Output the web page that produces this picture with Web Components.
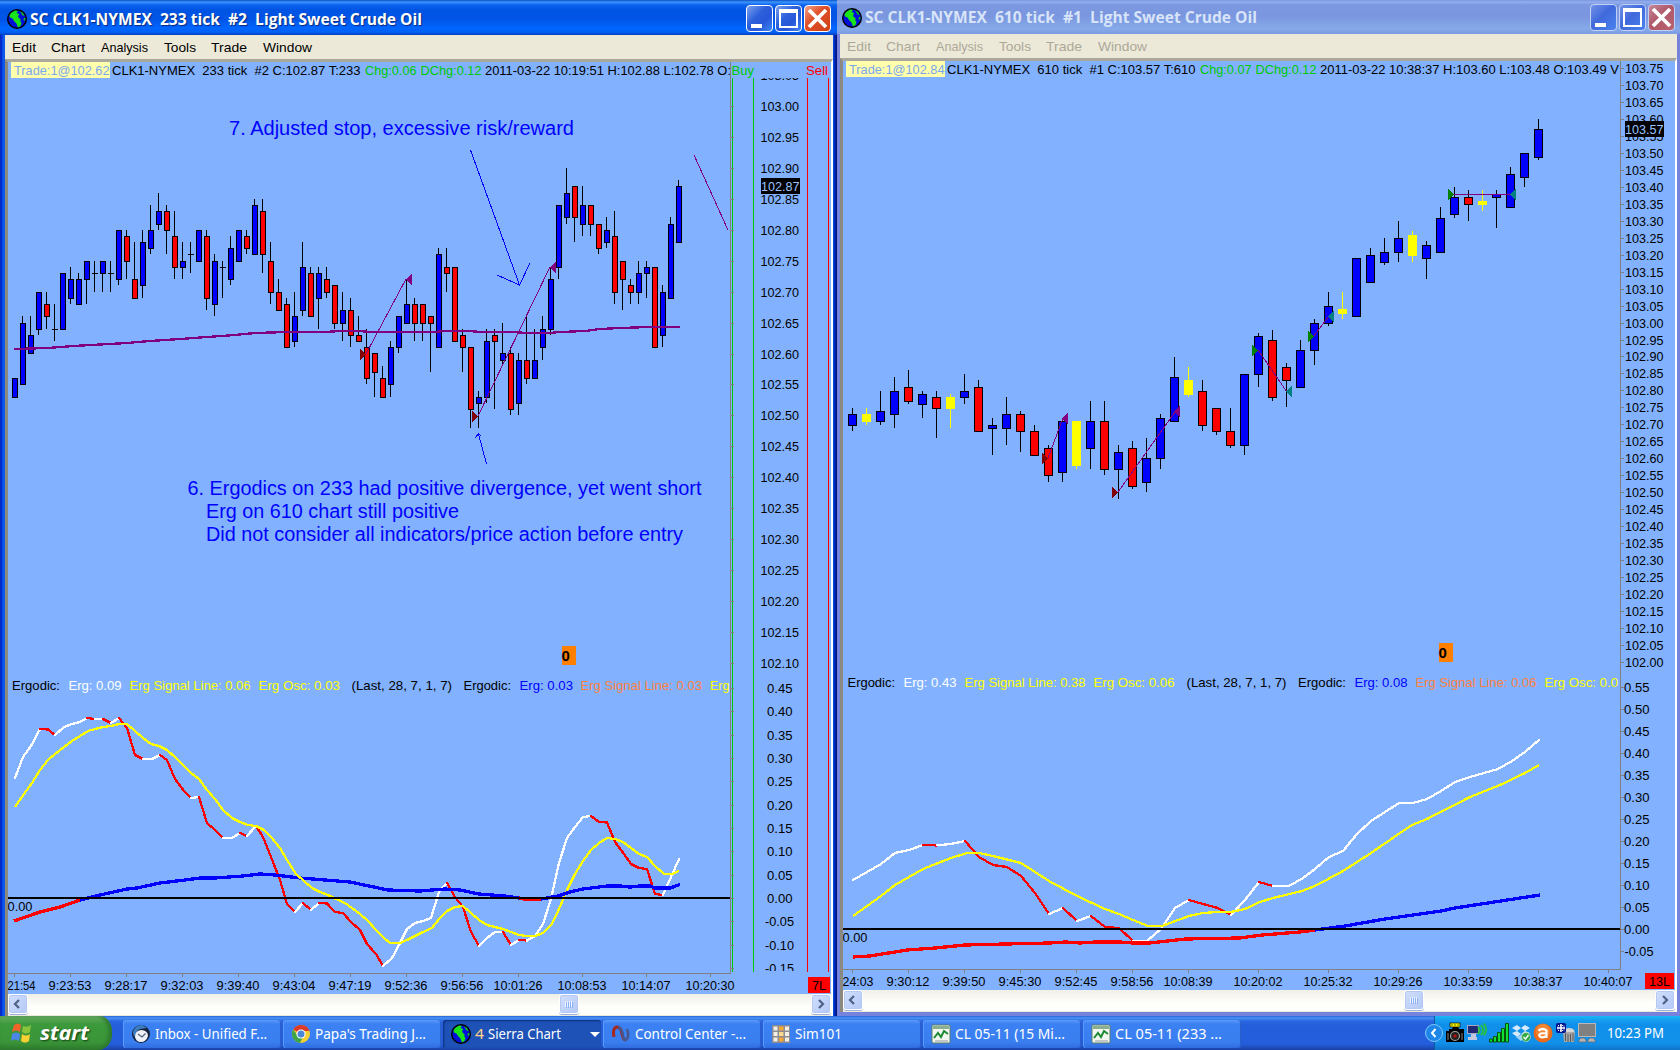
<!DOCTYPE html>
<html lang="en">
<head>
<meta charset="utf-8">
<title>Sierra Chart</title>
<style>
  html, body {
    margin: 0;
    height: 100%;
  }

  body {
    display: flex;
    flex-direction: column;
    width: 1680px;
    height: 1050px;
    overflow: hidden;
    background: #004e98;
    font-family: "Liberation Sans", Arial, sans-serif;
  }

  main {
    display: flex;
    height: 1016px;
  }
</style>
</head>
<body>
<main>
  <chart-window caption="SC CLK1-NYMEX  233 tick  #2  Light Sweet Crude Oil" thumb="531">
    <price-chart name="tick233"></price-chart>
  </chart-window>
  <chart-window inactive caption="SC CLK1-NYMEX  610 tick  #1  Light Sweet Crude Oil" thumb="541">
    <price-chart name="tick610"></price-chart>
  </chart-window>
</main>
<task-bar>
  <task-button icon="mail" label="Inbox - Unified F..." w="112"></task-button>
  <task-button icon="chrome" label="Papa's Trading J..." w="111"></task-button>
  <task-button icon="globe" label="Sierra Chart" count="4" w="73" active></task-button>
  <task-button icon="control" label="Control Center -..." w="111"></task-button>
  <task-button icon="grid" label="Sim101" w="47"></task-button>
  <task-button icon="chart" label="CL 05-11 (15 Mi..." w="110"></task-button>
  <task-button icon="chart" label="CL 05-11 (233 ..." w="107"></task-button>
</task-bar>

<script>
const BLACK = "#000";
const WHITE = "#fff";
const YELLOW = "#ff0";
const ORANGE = "#ff8040";
const BLUE = "#00f";
const RED = "#f00";
const GREEN = "#00c800";
const GRAY = "#808080";
const PURPLE = "#800080";
const MAROON = "#800000";
const BACK = "#82b2ff";

const ICONS = {
  globe: `
    <circle cx="10" cy="10" r="9.3" fill="#0010d8" stroke="#000" stroke-width="1.4"/>
    <path d="M4 4 L8 1.500 L11 2 L9.500 4 L12 5 L11 8 L12 9 L14 11 L13 12 L14.500 14 L13.500 17 L11 18.500 L9.500 14.500 L7 12 L5.500 9.500 L3 8.500 L2.500 6.500 Z" fill="#18e418"/>
    <path d="M13 2 L16 4 L17.500 7 L15.500 6.500 L14.500 4.500 Z M17 9 L18.500 9 L18 12 L16.500 11 Z" fill="#10c818"/>`,
  mail: `
    <circle cx="10" cy="10" r="9" fill="#16223c"/>
    <path d="M2 8 Q4 1 11 1 L16 4 L9 5 Q4 7 5 14 Q2 12 2 8Z" fill="#3e7cc0"/>
    <path d="M4 13 Q4 6.500 10 6 Q17 6.500 17 12 Q15 18 10 18 Q5 18 4 13Z" fill="#eef2f8"/>
    <path d="M7 10 L11 13 L14.500 9.500" fill="none" stroke="#55617c" stroke-width="1.300"/>`,
  chrome: `
    <circle cx="10" cy="10" r="9" fill="#f6cf35"/>
    <path d="M10 10 L2.200 5.500 A9 9 0 0 1 18.500 7 L10 7Z" fill="#dc3a2b"/>
    <path d="M2.200 5.500 A9 9 0 0 0 9 19 L12 13 L7 12Z" fill="#3fa648"/>
    <circle cx="10" cy="10" r="4.600" fill="#fff"/>
    <circle cx="10" cy="10" r="3.500" fill="#4a86d8"/>`,
  control: `
    <path d="M3 13 Q1 4 6 3 Q10 3 11 10 Q12 15 14 16" fill="none" stroke="#a8281e" stroke-width="3"/>
    <path d="M7 3 Q11 4 12 12 Q13 17 15 16 Q19 13 16 5" fill="none" stroke="#47568c" stroke-width="2.600"/>`,
  grid: `
    <rect x="1" y="1" width="18" height="18" fill="#8c8c94"/>
    <g fill="#f4f0e4"><rect x="2.500" y="2.500" width="4" height="4"/><rect x="14" y="2.500" width="4" height="4"/><rect x="2.500" y="8" width="4" height="4"/><rect x="14" y="8" width="4" height="4"/><rect x="2.500" y="13.500" width="4" height="4"/><rect x="14" y="13.500" width="4" height="4"/></g>
    <g fill="#f6a833"><rect x="8" y="2.500" width="4.500" height="4"/><rect x="8" y="13.500" width="4.500" height="4"/></g><rect x="8" y="8" width="4.500" height="4" fill="#ffd98c"/>`,
  chart: `
    <rect x="1" y="1" width="18" height="18" rx="1" fill="#f2f6ee" stroke="#5d7c62"/>
    <rect x="2" y="2" width="16" height="3" fill="#8bb091"/>
    <path d="M3 14 L7 9 L10 13 L13 7 L17 10" fill="none" stroke="#1e8a34" stroke-width="2"/>
    <path d="M4 17 H17" stroke="#8b98a0"/>`,
};

// Captions are stretched to a fixed width so the columns never drift with the installed font.
class FitText extends HTMLElement {
  connectedCallback() {
    const w = Number(this.getAttribute("w"));
    const h = Number(this.getAttribute("h") || 20);
    const size = this.getAttribute("size") || 13;
    this.attachShadow({ mode: "open" });
    this.shadowRoot.innerHTML = `
      <style>
        :host { display: block; flex: none; width: ${w}px; height: ${h}px; }
        svg { display: block; overflow: visible; }
        text { white-space: pre; fill: currentColor; font-size: ${size}px; }
      </style>
      <svg width="${w}" height="${h}"><text x="0" y="${h * 0.75}" textLength="${w}" lengthAdjust="spacingAndGlyphs"></text></svg>
    `;
    this.shadowRoot.querySelector("text").textContent = this.textContent;
  }
}

class ChartWindow extends HTMLElement {
  connectedCallback() {
    const inactive = this.hasAttribute("inactive");
    const thumb = this.getAttribute("thumb");
    this.attachShadow({ mode: "open" });
    this.shadowRoot.innerHTML = `
      <style>
        :host {
          display: flex;
          flex-direction: column;
          box-sizing: border-box;
          width: 837px;
          height: 1016px;
          padding: 0 4px 0 5px;
          background: linear-gradient(90deg, #0a3fb4 0, #0019cf 1px, #0c58ea 3px, #0f5ce8 5px, #0f5ce8 833px, #0030d0 834px, #001070 837px);
          --title: linear-gradient(#0b4fc4 0, #3d96ff 2px, #0b62ee 5px, #0054e3 10px, #0055e8 20px, #0066ff 28px, #0062f6 32px, #0040c0 35px);
          --menu: #000;
          --button: linear-gradient(135deg, #7ba2ee, #2d61dc 40%, #2757d8 65%, #3f86f2);
          --close: linear-gradient(135deg, #f0a389, #e0512b 40%, #cf3f16);
          --edge: #fff;
        }
        :host([inactive]) {
          width: 843px;
          padding: 0 3px 4px;
          background: #7683dc;
          --title: linear-gradient(#7c96e0 0, #92aeee 2px, #7b98e0 5px, #7a96df 16px, #86aae9 29px, #7e9be2 34px);
          --menu: #aca899;
          --button: linear-gradient(135deg, #7292e8, #4069dc 45%, #4a82ee);
          --close: linear-gradient(135deg, #c48a9c, #b0586a 45%, #b86370);
          --edge: #c2d0f4;
        }
        header {
          display: flex;
          align-items: center;
          box-sizing: border-box;
          height: 35px;
          margin: 0 -4px 0 -5px;
          padding: 2px 6px 0 7px;
          background: var(--title);
          color: #fff;
          font-family: "Open Sans", sans-serif;
          font-weight: 700;
        }
        :host([inactive]) header {
          height: 34px;
          margin: 0 -3px;
          padding: 1px 5px 0;
          color: #d8e4f8;
        }
        header fit-text { margin-left: 3px; text-shadow: 1px 1px 1px #0a2a80; }
        :host([inactive]) header fit-text { text-shadow: none; }
        .buttons { display: flex; gap: 2px; margin-left: auto; }
        .buttons svg {
          box-sizing: border-box;
          width: 27px;
          height: 27px;
          border: 1px solid var(--edge);
          border-radius: 4px;
          background: var(--button);
        }
        .buttons svg:last-child { background: var(--close); }
        nav {
          display: flex;
          gap: 15.7px;
          align-items: center;
          height: 24px;
          padding-left: 6.5px;
          background: #ece9d8;
          color: var(--menu);
        }
        .client {
          display: flex;
          flex-direction: column;
          flex: 1;
          box-sizing: border-box;
          border: solid;
          border-width: 3px 2px 0 3px;
          border-color: #aaa79c #fff #808080 #8c8a80;
          background: #ece9d8;
        }
        footer {
          display: flex;
          align-items: flex-start;
          height: 21px;
          flex: none;
          background: linear-gradient(#f0efe8, #fefefb 60%, #fefefb);
          border-bottom: 1px solid #ece9d8;
        }
        footer svg {
          box-sizing: border-box;
          width: 20px;
          height: 20px;
          border: 1px solid #fff;
          border-radius: 3px;
          background: linear-gradient(135deg, #d0dffd, #b4c8f6);
          box-shadow: inset 0 0 0 1px #b4c8f2, 0 1px #9db3de;
        }
        footer svg:nth-child(2) { margin-left: ${thumb}px; }
        footer svg:last-child { margin-left: auto; }
      </style>
      <header>
        <svg width="20" height="20" viewBox="0 0 20 20">${ICONS.globe}</svg>
        <fit-text w="392" h="${inactive ? 21 : 22}" size="15.5">${this.getAttribute("caption")}</fit-text>
        <div class="buttons">
          <svg viewBox="0 0 25 25"><path d="M4 18h11v4H4z" fill="#fff"/></svg>
          <svg viewBox="0 0 25 25"><path d="M3 3h19v19H3zM5 7v13h15V7z" fill="#fff" fill-rule="evenodd"/></svg>
          <svg viewBox="0 0 25 25"><path d="M4 4L21 21M21 4L4 21" stroke="#fff" stroke-width="3.8"/></svg>
        </div>
      </header>
      <nav>
        <fit-text w="24">Edit</fit-text>
        <fit-text w="34">Chart</fit-text>
        <fit-text w="47">Analysis</fit-text>
        <fit-text w="32">Tools</fit-text>
        <fit-text w="36">Trade</fit-text>
        <fit-text w="49">Window</fit-text>
      </nav>
      <div class="client">
        <slot></slot>
        <footer>
          <svg viewBox="0 0 18 18"><path d="M10 5L6 9L10 13" fill="none" stroke="#4d6185" stroke-width="2.2"/></svg>
          <svg viewBox="0 0 18 18"><path d="M5.500 6v6M7.500 6v6M9.500 6v6M11.500 6v6" stroke="#eef4fe"/><path d="M6.500 7v6M8.500 7v6M10.500 7v6M12.500 7v6" stroke="#8cb0f8"/></svg>
          <svg viewBox="0 0 18 18"><path d="M7 5L11 9L7 13" fill="none" stroke="#4d6185" stroke-width="2.2"/></svg>
        </footer>
      </div>
    `;
  }
}

// Candles: colour, high, open/close top, open/close bottom, low.
// y = base + value * tick, so the 233 chart is written in ticks below 103.00.
const CHARTS = {
  tick233: {
    box: [8, 62, 823, 932],
    clipRight: 730,
    axisBottom: 973,
    candle: { x: 12, step: 8, width: 6, wick: 2, base: 106, tick: 6.187 },
    candles: `B44,44,47,47 B34,35,45,45 B34,37,40,40 B30,30,36,37 R30,32,34,36 D32,36,36,38 B27,27,36,36
      B26,28,31,32 B27,28,32,32 B25,25,28,32 D25,27,27,30 B25,25,27,30 D25,27,27,30 B20,20,28,29
      R20,21,25,28 R22,28,31,31 B20,22,29,31 B16,20,23,24 B14,17,19,20 R16,17,20,24 R17,21,26,28
      B22,25,26,28 D22,24,24,27 B20,20,25,25 R20,21,31,33 B24,25,32,34 D25,26,26,31 B21,23,28,29
      B20,20,25,25 R20,21,23,24 B15,16,24,24 R15,17,24,27 R22,25,30,32 R28,30,33,33 R31,32,39,39
      B30,34,38,39 B22,26,33,34 R26,27,34,34 B26,27,31,36 R26,28,30,31 R29,29,35,36 B30,33,35,38
      R31,33,37,39 R34,37,38,38 R36,39,44,45 R40,40,43,47 R42,44,47,47 B38,39,45,47 B34,34,39,40
      B28,32,35,35 R31,32,35,38 R32,32,35,38 R34,34,35,43 B23,24,39,39 R23,26,27,30 R26,26,38,38
      R36,37,39,43 R39,39,49,52 B46,47,48,52 B36,38,47,48 R36,37,38,49 B35,40,41,42 R39,40,49,50
      B40,41,48,50 R34,41,44,45 B36,41,44,44 B34,36,39,41 B26,28,36,37 B16,16,26,28 B10,14,18,19
      R13,13,18,22 B13,16,19,21 R16,16,19,21 R19,19,23,24 B18,20,22,23 R17,21,30,32 R25,25,28,33
      R28,29,30,32 B25,27,30,32 B25,26,27,31 R26,26,39,39 B29,30,37,39 B18,19,31,31 B12,13,22,22`,
    lines: [
      [PURPLE, 2.3, "14,349 48,348 73,346 100,344.500 127,343 150,341 180,339 207,337 235,335 255,333 287,332 325,332 340,331 360,331 370,332 435,332 445,331 470,331 480,332 515,332 525,333 550,333 560,332 585,331 600,329 620,328 650,327 680,327"],
      [RED, 3.3, "14,921 40,912 60,907 80,900"],
      [BLUE, 3.3, "80,900 100,895 127,889 137,888 160,883 185,880 200,878 215,878 243,876 260,874 275,875 300,878 350,882 388,890 420,891 432,890 445,889 460,890 479,894 505,896 519,898"],
      [YELLOW, 2.3, "15,807 24,794 32,783 40,770 48,760 55,754 64,747 72,741 80,736 88,731 95,729 103,727 111,726 119,724 127,724 135,731 143,738 151,744 159,746 167,750 176,758 184,766 191,773 199,779 207,790 215,799 223,810 232,818 240,822 248,825 256,826 264,830 271,837 280,848 287,860 296,874 304,881 312,888 320,892 328,895 336,899 345,903 352,908 360,914 368,921 376,930 384,938 390,943 400,943 407,940 415,936 423,932 432,928 439,919 447,911 455,907 463,906 471,913 479,920 487,925 495,927 503,929 511,932 519,935 527,936 535,936 543,933 552,924 559,909 567,890 575,874 583,861 591,850 599,843 607,838 615,839 623,842 631,848 639,854 647,857 655,866 664,874 672,874 679,871"],
      [RED, 3.3, "519,898 527,899.500 541,899.500"],
      [BLUE, 3.3, "541,899 558,896 570,892 583,889 607,886 620,886 630,887 640,886 650,886 655,888 670,888 680,884.500"],
    ],
    erg: "15,778 23,757 31,746 40,729 48,729.500 55,735 64,727 72,724 80,722 87,718 95,719 103,719 111,723 119,718 127,728 135,755 143,759 152,759 160,755 167,760 175,779 184,791 191,798 199,797 207,823 215,830 223,838 232,838 240,833 247,836 256,826 263,837 271,857 280,880 287,904 295,912 303,903 311,910 319,903 327,903.500 335,912 343,913 351,922 360,930 367,944 376,954 383,966 392,958 399,945 407,929 415,923 423,921 431,918 439,892 447,883 455,897 463,907 471,932 479,946 487,938 495,932 503,932 511,945 519,940 527,940.500 535,936 543,924 551,899 559,863 567,838 575,827 583,817 591,816 599,822 607,822.500 615,842 624,854 631,864 639,868 647,869 655,894 663,895 671,877 679,859",
    zero: 897,
    thin: [
      [PURPLE, "366,354 406,279"],
      [PURPLE, "478,416 550,267"],
      [PURPLE, "694,155 728,230"],
      [BLUE, "470.500,150 519.500,285"],
      [BLUE, "497,275 519.500,285 530,263"],
      [BLUE, "486.500,464 478.500,434"],
      [BLUE, "475,438 478.500,434 481,436"],
    ],
    markers: [[MAROON, 360, 349, 1], [PURPLE, 412, 274, -1], [MAROON, 472, 411, 1], [PURPLE, 556, 262, -1]],
    prices: { first: 103.05, count: 20, y: 75.100, step: 30.935, x: 760.500 },
    levels: { first: 0.45, count: 13, y: 688, step: 23.330, x: 767 },
    last: ["102.87", 761, 178],
    header: [
      [14, 109.500, "Trade:1@102.62", "#7ba8ec"],
      [112, 360.500, "CLK1-NYMEX  233 tick  #2 C:102.87 T:233", BLACK],
      [365, 416.500, "Chg:0.06", GREEN],
      [420.500, 481.500, "DChg:0.12", GREEN],
      [485, 731, "2011-03-22 10:19:51 H:102.88 L:102.78 O:", BLACK],
    ],
    tag: 11,
    headerY: 75,
    legend: [
      [12, 60, "Ergodic:", BLACK],
      [68.500, 121.500, "Erg: 0.09", WHITE],
      [129.500, 250.500, "Erg Signal Line: 0.06", YELLOW],
      [258.500, 340, "Erg Osc: 0.03", YELLOW],
      [351.500, 452, "(Last, 28, 7, 1, 7)", BLACK],
      [463.500, 511, "Ergodic:", BLACK],
      [519.500, 573, "Erg: 0.03", BLUE],
      [580.500, 702, "Erg Signal Line: 0.03", ORANGE],
      [710, 729.500, "Erg", YELLOW],
    ],
    legendY: 690,
    times: ["21:54", "9:23:53", "9:28:17", "9:32:03", "9:39:40", "9:43:04", "9:47:19", "9:52:36", "9:56:56", "10:01:26", "10:08:53", "10:14:07", "10:20:30"],
    timeX: [14, 70, 126, 182, 238, 294, 350, 406, 462, 518, 582, 646, 710],
    zeroBox: [562, 646],
    lots: ["7L", 808, 977, 22],
    notes: [
      [229, 574, 135, "7. Adjusted stop, excessive risk/reward"],
      [187.500, 701.500, 495, "6. Ergodics on 233 had positive divergence, yet went short"],
      [206, 459, 518, "Erg on 610 chart still positive"],
      [206, 683, 541, "Did not consider all indicators/price action before entry"],
    ],
    dom: true,
  },
  tick610: {
    box: [843, 61, 832, 929],
    clipRight: 1620,
    axisBottom: 969,
    candle: { x: 848, step: 14, width: 9, wick: 4, base: 0, tick: 1 },
    candles: `B408,414,425,431 Y408,414,421,425 B391,411,421,425 B377,391,414,428 R370,387,401,404
      B391,394,404,418 R391,397,408,438 Y394,397,408,428 B374,391,397,404 R380,387,431,432
      B418,425,428,455 B397,414,428,445 R411,414,431,452 R425,431,455,456 R445,448,475,482
      B421,421,472,482 Y421,421,465,469 B401,421,448,469 R401,421,469,475 B445,452,469,499
      R441,448,486,489 B438,458,482,492 B414,418,458,469 B357,377,421,421 Y367,380,394,397
      R380,391,425,431 R408,408,431,435 R408,431,445,448 B374,374,445,455 B333,336,374,387
      R330,340,397,401 R363,367,380,407 B340,350,387,388 B319,323,350,365 B292,306,323,326
      Y292,309,313,319 B258,258,316,317 B248,255,282,283 B238,252,262,265 B221,238,252,262
      Y231,235,255,262 B241,245,258,279 B207,218,252,253 B187,197,214,218 R190,197,204,221
      Y190,201,204,211 B190,194,197,228 B167,174,207,208 B153,153,177,187 B119,129,157,160`,
    lines: [
      [RED, 3.3, "853,957 870,956 907,950 935,948 965,945 1005,944 1050,943 1066,942 1080,943 1095,942 1120,942 1133,943 1150,943 1185,939 1240,938 1262,935 1300,932 1315,930"],
      [BLUE, 3.3, "1315,930 1345,926 1385,919 1441,911 1455,908 1540,895"],
      [YELLOW, 2.3, "853,916 867,906 881,896 895,885 923,869 951,858 967,853 979,853 993,856 1021,863 1035,872 1049,881 1077,896 1105,909 1119,914 1133,920 1148,926 1162,926 1189,916 1203,913 1217,912 1231,912 1245,909 1260,902 1273,898 1302,891 1315,886 1343,871 1371,853 1400,833 1412,825 1427,819 1470,797 1500,785 1525,773 1539,765"],
    ],
    erg: "853,880 867,872 881,864 895,853 909,850 923,845 937,845.400 951,844 965,841 979,857 993,865 1007,867 1021,876 1035,893 1049,914 1063,908 1077,921 1091,916 1105,927 1119,928 1133,941 1147,941 1161,929 1175,908 1189,900 1203,904 1218,908 1231,915 1245,900 1259,882 1273,886 1289,886 1303,878 1315,869 1329,857 1343,851 1357,834 1371,821 1385,812 1399,803 1413,803 1427,799 1441,791 1455,782 1470,777 1484,773 1498,769 1512,761 1525,752 1539,740",
    zero: 928,
    thin: [
      [PURPLE, "1048,458 1063,418"],
      [PURPLE, "1118,492 1175,412"],
      [PURPLE, "1258,350 1287,392"],
      [PURPLE, "1314,336 1329,316"],
      [PURPLE, "1454,194.500 1510,194.500"],
    ],
    markers: [
      [MAROON, 1042, 453, 1], [PURPLE, 1068, 413, -1], [MAROON, 1112, 487, 1], [PURPLE, 1180, 406, -1],
      ["#008000", 1252, 345, 1], ["#008080", 1292, 386, -1], ["#008000", 1308, 331, 1], ["#008080", 1334, 311, -1],
      ["#008000", 1448, 189, 1], ["#008080", 1516, 189, -1],
    ],
    prices: { first: 103.75, count: 36, y: 68, step: 16.970, x: 1625 },
    levels: { first: 0.55, count: 13, y: 687, step: 22, x: 1624 },
    last: ["103.57", 1625, 121],
    header: [
      [849, 944.500, "Trade:1@102.84", "#7ba8ec"],
      [947, 1195.500, "CLK1-NYMEX  610 tick  #1 C:103.57 T:610", BLACK],
      [1200, 1251.500, "Chg:0.07", GREEN],
      [1255.500, 1316.500, "DChg:0.12", GREEN],
      [1320, 1619, "2011-03-22 10:38:37 H:103.60 L:103.48 O:103.49 V", BLACK],
    ],
    tag: 846,
    headerY: 74,
    legend: [
      [847.500, 895, "Ergodic:", BLACK],
      [903.500, 956.500, "Erg: 0.43", WHITE],
      [964.500, 1085.500, "Erg Signal Line: 0.38", YELLOW],
      [1093.500, 1174.500, "Erg Osc: 0.06", YELLOW],
      [1186.500, 1286.500, "(Last, 28, 7, 1, 7)", BLACK],
      [1298, 1346, "Ergodic:", BLACK],
      [1354.500, 1407.500, "Erg: 0.08", BLUE],
      [1415.500, 1536.500, "Erg Signal Line: 0.06", ORANGE],
      [1544.500, 1618, "Erg Osc: 0.0", YELLOW],
    ],
    legendY: 687,
    times: ["24:03", "9:30:12", "9:39:50", "9:45:30", "9:52:45", "9:58:56", "10:08:39", "10:20:02", "10:25:32", "10:29:26", "10:33:59", "10:38:37", "10:40:07"],
    timeX: [852, 908, 964, 1020, 1076, 1132, 1188, 1258, 1328, 1398, 1468, 1538, 1608],
    zeroBox: [1439, 643],
    lots: ["13L", 1645, 973, 29],
    notes: [],
  },
};

class PriceChart extends HTMLElement {
  connectedCallback() {
    this.chart = CHARTS[this.getAttribute("name")];
    const c = this.chart;
    const [left, top, width, height] = c.box;
    this.attachShadow({ mode: "open" });
    this.shadowRoot.innerHTML = `
      <style>
        :host { display: block; width: ${width}px; height: ${height}px; background: ${BACK}; }
        svg { display: block; }
        g { shape-rendering: crispEdges; }
        text { font-family: "Liberation Sans", Arial, sans-serif; white-space: pre; }
      </style>
      <svg width="${width}" height="${height}" viewBox="${left} ${top} ${width} ${height}">
        <defs>
          <clipPath id="plot"><rect x="${left}" y="${top}" width="${c.clipRight - left}" height="${height}"/></clipPath>
          <clipPath id="scale"><rect x="${c.clipRight}" y="${c.dom ? 78 : top}" width="110" height="${c.dom ? 893 : height}"/></clipPath>
        </defs>
        <g>${this.candles()}</g>
        <g fill="none">${this.studies()}</g>
        <g>${this.markers()}</g>
        <g>${this.axes()}</g>
        <g clip-path="url(#plot)">${this.captions()}</g>
        <g clip-path="url(#scale)">${this.scale()}</g>
        ${this.badges()}
      </svg>
    `;
  }

  rect(x, y, w, h, fill) {
    return `<rect x="${x}" y="${y}" width="${w}" height="${h}" fill="${fill}"/>`;
  }

  text(x1, x2, y, value, fill = BLACK, size = 13) {
    return `<text x="${x1}" y="${y}" textLength="${x2 - x1}" lengthAdjust="spacingAndGlyphs" fill="${fill}" font-size="${size}">${value}</text>`;
  }

  candles() {
    const { x, step, width, wick, base, tick } = this.chart.candle;
    return this.chart.candles.trim().split(/\s+/).map((item, i) => {
      const kind = item[0];
      const [high, bodyTop, bodyBottom, low] = item.slice(1).split(",").map((v) => Math.round(base + v * tick));
      const cx = x + i * step;
      const line = kind === "Y" ? YELLOW : BLACK;
      let out = this.rect(cx + wick, high, 1, low - high, line);
      if (kind === "D") {
        return out + this.rect(cx, bodyTop, width, 1, line);
      }
      const fill = { B: BLUE, R: RED, Y: YELLOW }[kind];
      out += this.rect(cx, bodyTop, width, bodyBottom - bodyTop + 1, line);
      return out + this.rect(cx + 1, bodyTop + 1, width - 2, Math.max(bodyBottom - bodyTop - 1, 0), fill);
    }).join("");
  }

  studies() {
    const c = this.chart;
    const poly = ([color, width, points]) => `<polyline points="${points}" stroke="${color}" stroke-width="${width}"/>`;
    const points = c.erg.split(" ").map((p) => p.split(",").map(Number));
    let out = "";
    // the ergodic turns red on every falling bar
    for (let i = 1; i < points.length; i++) {
      const [a, b] = [points[i - 1], points[i]];
      out += `<path d="M${a} L${b}" stroke="${b[1] > a[1] ? RED : WHITE}" stroke-width="2.3" stroke-linecap="round"/>`;
    }
    out += c.lines.map(poly).join("");
    out += `<path d="M${c.box[0]} ${c.zero + 1}H${c.clipRight}" stroke="#000" stroke-width="2"/>`;
    out += c.thin.map(([color, pts]) => poly([color, 1, pts])).join("");
    return out;
  }

  markers() {
    return this.chart.markers.map(([color, x, y, dir]) =>
      `<path d="M${x} ${y}v11l${6 * dir} -5.500z" fill="${color}"/>`).join("");
  }

  axes() {
    const c = this.chart;
    const [left, top] = c.box;
    let out = this.rect(c.clipRight, top, 1, c.axisBottom - top + 1, GRAY);
    out += this.rect(left, c.axisBottom, c.clipRight - left, 1, GRAY);
    out += c.timeX.map((x) => this.rect(x, c.axisBottom, 1, 4, GRAY)).join("");
    if (c.dom) {
      out += this.rect(732, 78, 1, 894, GREEN) + this.rect(753, 78, 1, 894, GREEN);
      out += this.rect(807, 78, 1, 894, RED) + this.rect(828, 78, 1, 894, RED);
    }
    for (const axis of [c.prices, c.levels]) {
      for (let i = 0; i < axis.count; i++) {
        const y = Math.round(axis.y + i * axis.step);
        if ((y > 78 || !c.dom) && y < c.axisBottom + 1 && !(axis === c.levels && y > 955 && !c.dom)) {
          out += this.rect(c.clipRight, y, 4, 1, GRAY);
        }
      }
    }
    return out;
  }

  captions() {
    const c = this.chart;
    const [left] = c.box;
    let out = this.rect(c.tag, c.box[1], 99, 16, "#ffffac");
    out += c.header.map(([a, b, value, color]) => this.text(a, b, c.headerY, value, color)).join("");
    out += c.legend.map(([a, b, value, color]) => this.text(a, b, c.legendY, value, color)).join("");
    out += c.notes.map(([a, b, y, value]) => this.text(a, b, y, value, BLUE, 19.5)).join("");
    return out + this.text(left - 0.5, left + 24.5, c.zero + 14, "0.00");
  }

  scale() {
    const { prices, levels } = this.chart;
    let out = "";
    for (let i = 0; i < prices.count; i++) {
      const y = prices.y + i * prices.step + 5;
      out += this.text(prices.x, prices.x + 38.5, y, (prices.first - i * 0.05).toFixed(2));
    }
    for (let i = 0; i < levels.count; i++) {
      const value = (Math.round((levels.first - i * 0.05) * 100) / 100 || 0).toFixed(2);
      const y = levels.y + i * levels.step + 5;
      if (value < 0) {
        const x = this.chart.dom ? levels.x - 2 : levels.x + 0.5;
        out += this.text(x, x + 29, y, value);
      } else {
        out += this.text(levels.x, levels.x + 25.5, y, value);
      }
    }
    return out;
  }

  badges() {
    const c = this.chart;
    const [price, px, py] = c.last;
    const [zx, zy] = c.zeroBox;
    const [lots, lx, ly, lw] = c.lots;
    let out = this.rect(px, py, 39, 16, BLACK) + this.text(px, px + 38.500, py + 13, price, "#9cc4ff");
    out += this.rect(zx, zy, 14, 19, "#ff8000");
    out += `<text x="${zx - 0.5}" y="${zy + 14.5}" font-size="15" font-weight="700">0</text>`;
    out += this.rect(lx, ly, lw, 16, RED) + this.text(lx + 4, lx + lw - 4, ly + 12.500, lots);
    out += c.times.map((time, i) => {
      if (i === 0) {
        return this.text(c.box[0] - 0.5, c.box[0] + (c.dom ? 27.500 : 30.500), c.axisBottom + 16.500, time);
      }
      const half = time.length > 7 ? 24.500 : 21.500;
      return this.text(c.timeX[i] - half, c.timeX[i] + half, c.axisBottom + 16.500, time);
    }).join("");
    if (c.dom) {
      out += this.text(731.500, 754, 75, "Buy", GREEN) + this.text(806, 828, 75, "Sell", RED);
    }
    return out;
  }
}

class TaskButton extends HTMLElement {
  connectedCallback() {
    const count = this.getAttribute("count");
    this.attachShadow({ mode: "open" });
    this.shadowRoot.innerHTML = `
      <style>
        :host {
          display: flex;
          align-items: center;
          box-sizing: border-box;
          width: 158px;
          height: 28px;
          padding-left: 8px;
          border-radius: 3px;
          background: linear-gradient(#5c9bf9, #3c81f3 4px, #3a7ff0 22px, #2f6ce0);
          box-shadow: inset 1px 0 #5a9bff, inset -1px 0 #2a60c8;
          color: #fff;
        }
        :host([active]) {
          background: #1e52b7;
          box-shadow: inset 1px 1px 2px #0c2f78;
        }
        svg { flex: none; margin-right: 4px; }
        .count { margin-right: 4px; color: #ffd08a; }
        .arrow { margin-left: auto; border: 5px solid transparent; border-top-color: #fff; border-bottom: 0; margin-right: 1px; }
      </style>
      <svg width="20" height="20" viewBox="0 0 20 20">${ICONS[this.getAttribute("icon")]}</svg>
      ${count ? `<fit-text class="count" w="9" h="18" size="14">${count}</fit-text>` : ""}
      <fit-text w="${this.getAttribute("w")}" h="18" size="14">${this.getAttribute("label")}</fit-text>
      ${count ? `<span class="arrow"></span>` : ""}
    `;
  }
}

class TaskBar extends HTMLElement {
  connectedCallback() {
    this.attachShadow({ mode: "open" });
    this.shadowRoot.innerHTML = `
      <style>
        :host {
          display: flex;
          height: 34px;
          background: linear-gradient(#2a62d8 0, #4a93f4 2px, #2a66e0 5px, #245edb 10px, #245edc 28px, #1941a5 34px);
          font-family: "Noto Sans", sans-serif;
        }
        .start {
          display: flex;
          align-items: center;
          gap: 6px;
          box-sizing: border-box;
          width: 112px;
          padding-left: 10px;
          border-radius: 0 12px 14px 0 / 0 16px 16px 0;
          background: linear-gradient(#7dbb7a 0, #5aa754 3px, #3c9a3c 8px, #3a9538 26px, #2c7a2c);
          box-shadow: inset -3px 0 4px #2c742c;
          color: #fff;
          font-style: italic;
          font-weight: 700;
          text-shadow: 1px 1px 2px #123c12;
        }
        .tasks { display: flex; align-items: center; gap: 2px; margin: 2px 0 0 11px; }
        .tray {
          display: flex;
          align-items: center;
          box-sizing: border-box;
          width: 246px;
          margin-left: auto;
          background: linear-gradient(#18b8f4 0, #18a4f2 3px, #1090ea 8px, #1290ea 27px, #0d74c8);
          box-shadow: inset 1px 0 #0a5a9c;
          color: #fff;
        }
        .chevron { margin-left: -10px; }
        .icons { margin: 0 10px 0 1px; }
      </style>
      <div class="start">
        <svg width="24" height="24" viewBox="0 0 24 24">
          <path d="M4 4Q8 1 11 4L10 11Q6 8 2 11Z" fill="#f0642a"/>
          <path d="M13 5Q17 7 21 4L20 11Q16 14 12 11Z" fill="#8ac43c"/>
          <path d="M2 13Q6 10 10 13L9 20Q5 17 1 20Z" fill="#4c86e8"/>
          <path d="M12 13Q16 16 20 13L19 20Q15 23 11 20Z" fill="#fcd032"/>
        </svg>
        <fit-text w="49" h="26" size="20">start</fit-text>
      </div>
      <div class="tasks"><slot></slot></div>
      <div class="tray">
        <svg class="chevron" width="20" height="20" viewBox="0 0 20 20">
          <circle cx="10" cy="10" r="8.500" fill="#1e86e8" stroke="#7cc6fa"/>
          <path d="M11.500 6L8 10L11.500 14" fill="none" stroke="#fff" stroke-width="2"/>
        </svg>
        <svg class="icons" width="152" height="22" viewBox="0 0 152 22">
          <rect x="5" y="1" width="10" height="4" fill="#ff0" stroke="#000" stroke-width=".7"/>
          <path d="M7 2v2M10 2v2M13 2v2" stroke="#000" stroke-width=".6"/>
          <path d="M1 9h3V7h3l1-2h5l1 2h5v13H1z"/>
          <circle cx="10" cy="14" r="4.500" fill="#222" stroke="#a4a4a4" stroke-width="1.200"/>
          <circle cx="10" cy="14" r="1.800" fill="#a11"/>
          <path d="M3 11v7M17 11v7" stroke="#888"/>
          <rect x="22" y="3" width="12" height="9" fill="#a8a8c4"/><rect x="23" y="4" width="10" height="7" fill="#202a74"/>
          <path d="M26 12h5v3h1v3H23v-3h3z" fill="#c4c8e0"/>
          <path d="M33 5q3 3 0 7M36 3q4 5 0 10M39 1.500q4 6 0 12" fill="none" stroke="#28c040" stroke-width="2"/>
          <g fill="#10e030" stroke="#04500a"><path d="M44.500 17h3v3h-3zM48.500 14.500h3v5.500h-3zM52.500 10.500h3v9.500h-3zM56.500 6.500h3v13.500h-3zM60.500 1.500h3v18.500h-3z"/></g>
          <path d="M67 6l5-3 4 3-4 3zM85 6l-5-3-4 3 4 3zM67 11l5-2 4 3-4 3zM85 11l-5-2-4 3 4 3z" fill="#d4eaff"/>
          <path d="M71 15l5-2 5 2-5 4z" fill="#a4d4fa"/>
          <circle cx="81" cy="15" r="4.500" fill="#34a844" stroke="#d0f0d0" stroke-width=".6"/>
          <path d="M78.500 15l2 2 3-4" fill="none" stroke="#fff" stroke-width="1.400"/>
          <circle cx="98" cy="11" r="9.500" fill="#ea6c1a"/><circle cx="98" cy="9" r="7" fill="#fba04c" opacity=".5"/>
          <path d="M93.500 8.500Q98 5.500 101.500 8.500V16M101.500 11.500Q94 10.500 94.200 13.500Q95.500 17 101.500 14" fill="none" stroke="#fff" stroke-width="2.200"/>
          <ellipse cx="124" cy="9" rx="5.500" ry="3" fill="#d4d4d4"/><path d="M118 10h12l-1 10h-10z" fill="#a8a8a8"/>
          <path d="M120.500 11v8M123 12v8M125.500 12v8M128 11v8" stroke="#505050" stroke-width=".9"/>
          <rect x="111" y="1" width="10" height="10" rx="2" fill="#00128c"/>
          <path d="M116 2v8M112 6h8" stroke="#fff" stroke-width="1.500"/>
          <path d="M113 3.500h6v5h-6z" fill="none" stroke="#fff" stroke-dasharray="1 1"/>
          <rect x="133.500" y="1.500" width="17" height="13" fill="#808080" stroke="#b8b8b8"/>
          <path d="M134 20v-2l2-2h3l2 2v2zM143 20v-2l2-2h3l2 2v2z" fill="#b4b4b4" stroke="#686868" stroke-width=".7"/>
        </svg>
        <fit-text w="57" h="19" size="14">10:23 PM</fit-text>
      </div>
    `;
  }
}

customElements.define("fit-text", FitText);
customElements.define("chart-window", ChartWindow);
customElements.define("price-chart", PriceChart);
customElements.define("task-button", TaskButton);
customElements.define("task-bar", TaskBar);

// the lower scale of the 610 chart ends at -0.05
</script>
</body>
</html>
